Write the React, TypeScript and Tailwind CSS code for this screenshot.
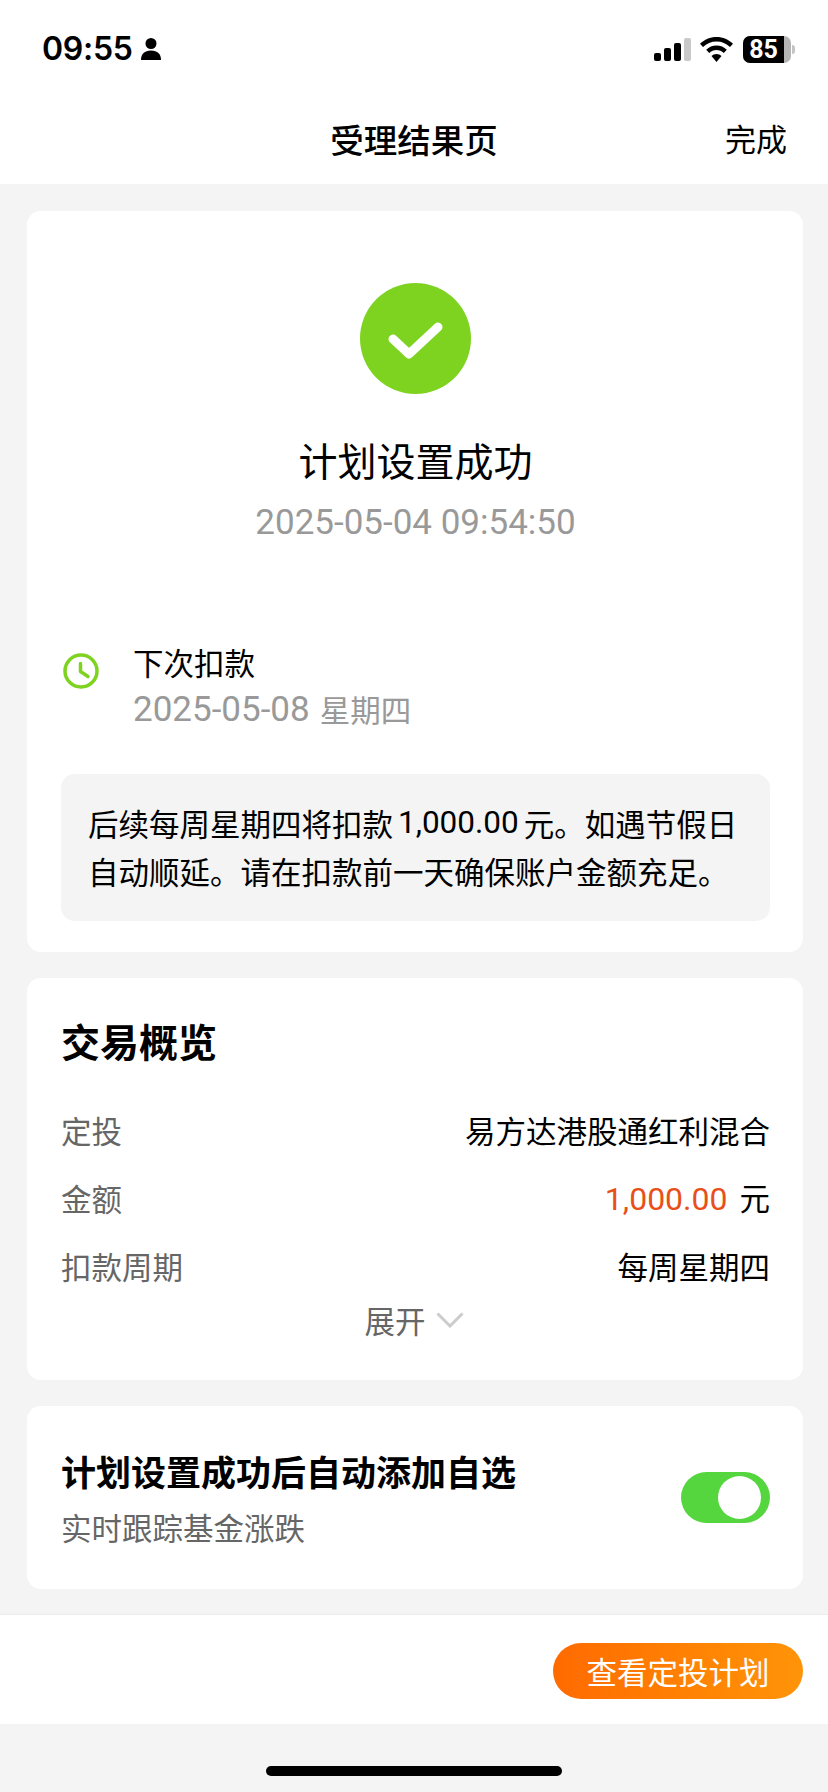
const cjk = "font-['Noto_Sans_CJK_SC','Noto_Sans',sans-serif]";

function StatusBar() {
  return (
    <div className="flex h-[98px] items-center justify-between pl-[42px] pr-[33px]">
      <div className="flex items-center gap-[7px]">
        <span className="font-['Inter',sans-serif] text-[32px] font-semibold leading-[40px] tracking-[-0.3px] text-black">09:55</span>
        <svg width="22" height="24" viewBox="0 0 22 24" fill="#000">
          <circle cx="11" cy="6.5" r="5.5" />
          <path d="M1 23c0-6 3.5-9.500 10-9.500S21 17 21 23z" />
        </svg>
      </div>
      <div className="flex items-center gap-[9px]">
        <svg width="37" height="23" viewBox="0 0 37 23">
          <rect x="0" y="15" width="7" height="8" rx="2" fill="#000" />
          <rect x="10" y="10" width="7" height="13" rx="2" fill="#000" />
          <rect x="20" y="5" width="7" height="18" rx="2" fill="#000" />
          <rect x="30" y="0" width="7" height="23" rx="2" fill="#c9c9c9" />
        </svg>
        <svg width="33" height="25" viewBox="0 0 33 25" fill="#000">
          <path d="M16.500 0C10 0 4.500 2.500 0 6.800l3 3.200c3.700-3.500 8.200-5.500 13.500-5.500S26.300 6.500 30 10l3-3.200C28.500 2.500 23 0 16.500 0z" />
          <path d="M16.500 8.500c-4 0-7.500 1.500-10.300 4.200l3 3.200c2-1.900 4.500-3 7.300-3s5.300 1.100 7.300 3l3-3.200C24 10 20.500 8.500 16.500 8.500z" />
          <path d="M16.500 17c-2 0-3.700.8-5 2l5 6 5-6c-1.300-1.200-3-2-5-2z" />
        </svg>
        <div className="ml-[1px] flex items-center">
          <div className="flex h-[27px] w-[48px] items-center overflow-hidden rounded-[7px] bg-[#b5b5b5]">
            <div className="flex h-full w-[41px] items-center justify-center bg-black font-['Roboto',sans-serif] text-[25px] font-bold leading-none text-white">85</div>
          </div>
          <div className="ml-[1px] h-[9px] w-[3px] rounded-r-full bg-[#c4c4c4]" />
        </div>
      </div>
    </div>
  );
}

function NavBar() {
  return (
    <div className="relative flex h-[86px] items-center justify-center pb-[4px]">
      <span className="text-[33.5px] font-medium leading-[46px] text-black">受理结果页</span>
      <span className="absolute right-[41px] top-[17px] text-[31px] leading-[46px] text-black">完成</span>
    </div>
  );
}

function Row({ label, children }: { label: string; children: React.ReactNode }) {
  return (
    <div className="flex h-[68px] items-center justify-between">
      <span className="text-[#666666]">{label}</span>
      <span className="text-black">{children}</span>
    </div>
  );
}

export default function App() {
  return (
    <div className={`${cjk} flex h-[1792px] w-[828px] flex-col overflow-hidden bg-[#f4f4f4]`}>
      <div className="bg-white">
        <StatusBar />
        <NavBar />
      </div>

      <div className="flex flex-col gap-[26px] pl-[27px] pr-[25px] pt-[27px]">
        <section className="flex h-[741px] flex-col rounded-[14px] bg-white pl-[34px] pr-[33px] pt-[72px]">
          <div className="flex flex-col items-center">
            <div className="flex h-[111px] w-[111px] items-center justify-center rounded-full bg-[#7ed321]">
              <svg width="55" height="37" viewBox="0 0 55 37" fill="none" stroke="#fff" strokeWidth="9" strokeLinecap="round" strokeLinejoin="round" className="mt-[4px]">
                <path d="M5 17l16 15L50 5" />
              </svg>
            </div>
            <h1 className="mt-[36px] text-[39px] font-normal leading-[58px] text-black">计划设置成功</h1>
            <p className="mt-[12px] font-['Roboto',sans-serif] text-[35px] leading-[46px] text-[#999999]">2025-05-04 09:54:50</p>
          </div>

          <div className="mt-[93px] flex">
            <svg width="36" height="36" viewBox="0 0 36 36" fill="none" stroke="#7ed321" strokeWidth="3.500" strokeLinecap="round" strokeLinejoin="round" className="ml-[2px] mt-[14px] shrink-0">
              <circle cx="18" cy="18" r="16" />
              <path d="M17.500 10.500v8L25 23.500" />
            </svg>
            <div className="ml-[34px]">
              <p className="text-[30.5px] leading-[46px] text-black">下次扣款</p>
              <p className="flex h-[46px] items-center pt-[2px] text-[30.5px] leading-none text-[#999999]">
                <span className="font-['Roboto',sans-serif] text-[35px]">2025-05-08</span>
                <span className="ml-[10px]">星期四</span>
              </p>
            </div>
          </div>

          <div className="mt-[43px] whitespace-nowrap rounded-[14px] bg-[#f4f4f4] pl-[27px] pr-[27px] pt-[25px] pb-[26px] text-[30.5px] leading-[48px] text-black">
            <p className="flex h-[48px] items-center">
              后续每周星期四将扣款
              <span className="mx-[5px] font-['Roboto',sans-serif] text-[31.5px] leading-none">1,000.00</span>
              元。如遇节假日
            </p>
            <p className="h-[48px]">自动顺延。请在扣款前一天确保账户金额充足。</p>
          </div>
        </section>

        <section className="h-[402px] rounded-[14px] bg-white pl-[34px] pr-[33px] pt-[33px] text-[30.5px]">
          <h2 className="text-[39px] font-bold leading-[58px] text-black">交易概览</h2>
          <div className="mt-[28px]">
            <Row label="定投">易方达港股通红利混合</Row>
            <Row label="金额">
              <span className="font-['Roboto',sans-serif] text-[32px] text-[#e8501a]">1,000.00</span>
              <span className="ml-[12px]">元</span>
            </Row>
            <Row label="扣款周期">每周星期四</Row>
          </div>
          <div className="-mt-[4px] flex items-center justify-center gap-[10px] pr-[3px] text-[#666666]">
            <span className="leading-[46px]">展开</span>
            <svg width="28" height="16" viewBox="0 0 28 16" fill="none" stroke="#cccccc" strokeWidth="3">
              <path d="M1.500 1.500L14 14 26.500 1.500" />
            </svg>
          </div>
        </section>

        <section className="flex h-[183px] items-center justify-between rounded-[14px] bg-white pl-[34px] pr-[33px]">
          <div>
            <p className="text-[35px] font-bold leading-[50px] text-black">计划设置成功后自动添加自选</p>
            <p className="mt-[9px] text-[30.5px] leading-[44px] text-[#666666]">实时跟踪基金涨跌</p>
          </div>
          <div className="flex h-[51px] w-[89px] items-center justify-end rounded-full bg-[#55d63f] pr-[9px]">
            <div className="h-[43px] w-[43px] rounded-full bg-white" />
          </div>
        </section>
      </div>

      <footer className="mt-[25px] flex h-[110px] items-start justify-end border-t border-[#ececec] bg-white pr-[25px] pt-[28px]">
        <button className="h-[56px] w-[250px] rounded-full bg-gradient-to-r from-[#ff6a00] to-[#ff9408] text-[30.5px] leading-none text-white">查看定投计划</button>
      </footer>

      <div className="flex justify-center pt-[42px]">
        <div className="h-[10px] w-[296px] rounded-full bg-black" />
      </div>
    </div>
  );
}
